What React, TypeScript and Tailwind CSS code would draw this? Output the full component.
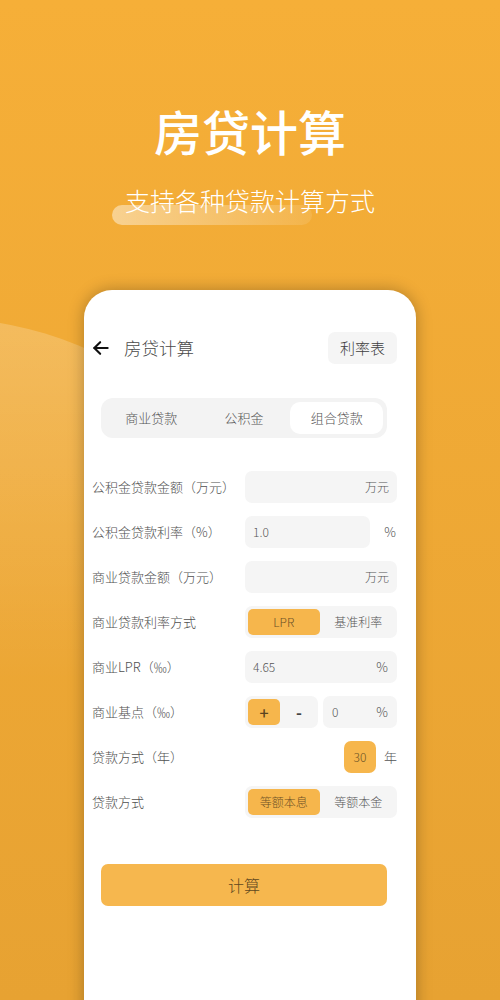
import React from "react";

function Seg({ a, b }: { a: string; b: string }) {
  return (
    <div className="grid h-[32px] w-[152px] grid-cols-2 gap-[3px] rounded-[7px] bg-[#f5f5f5] p-[3px]">
      <div className="flex items-center justify-center rounded-[5px] bg-[#f6b64c] text-[12px] text-[#6e5226]">{a}</div>
      <div className="flex items-center justify-center text-[12px] text-[#555]">{b}</div>
    </div>
  );
}

function Row({ label, children }: { label: string; children: React.ReactNode }) {
  return (
    <div className="flex h-[32px] items-center">
      <div className="w-[153px] shrink-0 text-[13px] leading-[20px] text-[#4f4f4f]">{label}</div>
      <div className="flex flex-1 items-center justify-end">{children}</div>
    </div>
  );
}

export default function App() {
  return (
    <div className="relative h-[1000px] w-[500px] overflow-hidden bg-gradient-to-b from-[#f6af38] to-[#e7a232] font-['Noto_Sans_CJK_SC',sans-serif]">
      {/* decorative circle */}
      <div className="absolute left-[-422px] top-[318px] h-[724px] w-[724px] rounded-full bg-gradient-to-b from-white/20 to-white/0 to-[50%]" />
      {/* subtitle highlight bar */}
      <div className="absolute left-[112px] top-[205px] h-[20px] w-[200px] rounded-full bg-gradient-to-r from-white/45 to-white/10" />

      <div className="relative flex flex-col items-center">
        <div className="mt-[102px] h-[56px] text-[48px] font-medium leading-[56px] text-white">房贷计算</div>
        <div className="mt-[25px] h-[34px] text-[25px] font-light leading-[34px] text-white">支持各种贷款计算方式</div>

        <div className="mt-[73px] h-[800px] w-[332px] rounded-t-[28px] bg-white pl-[8px] pr-[19px] pt-[42px] font-light shadow-[0_0_16px_rgba(0,0,0,0.28)]">
          {/* header */}
          <div className="flex h-[32px] items-center">
            <svg width="20" height="20" viewBox="0 0 24 24" fill="none" stroke="#111" strokeWidth="2.5" strokeLinecap="round" strokeLinejoin="round" className="ml-[-1px]">
              <path d="M20 12H4" />
              <path d="M11 5l-7 7 7 7" />
            </svg>
            <div className="ml-[13px] text-[17.5px] leading-[24px] text-[#4a4a4a]">房贷计算</div>
            <div className="ml-auto flex h-[32px] w-[69px] items-center justify-center rounded-[7px] bg-[#f5f5f5] text-[15px] text-[#3f3f3f]">利率表</div>
          </div>

          {/* tabs */}
          <div className="ml-[9px] mr-[10px] mt-[34px] grid h-[40px] grid-cols-3 rounded-[12px] bg-[#f3f3f3] p-[4px]">
            <div className="flex items-center justify-center text-[13px] text-[#555]">商业贷款</div>
            <div className="flex items-center justify-center text-[13px] text-[#555]">公积金</div>
            <div className="flex items-center justify-center rounded-[10px] bg-white text-[13px] text-[#555]">组合贷款</div>
          </div>

          {/* rows */}
          <div className="mt-[33px] flex flex-col gap-[13px]">
            <Row label="公积金贷款金额（万元）">
              <div className="flex h-[32px] w-[152px] items-center justify-end rounded-[7px] bg-[#f5f5f5] pr-[8px] text-[12px] text-[#555]">万元</div>
            </Row>
            <Row label="公积金贷款利率（%）">
              <div className="flex h-[32px] w-[125px] items-center rounded-[7px] bg-[#f5f5f5] pl-[8px] text-[12px] text-[#555]">1.0</div>
              <div className="w-[27px] pr-[1px] text-right text-[13px] text-[#555]">%</div>
            </Row>
            <Row label="商业贷款金额（万元）">
              <div className="flex h-[32px] w-[152px] items-center justify-end rounded-[7px] bg-[#f5f5f5] pr-[8px] text-[12px] text-[#555]">万元</div>
            </Row>
            <Row label="商业贷款利率方式">
              <Seg a="LPR" b="基准利率" />
            </Row>
            <Row label="商业LPR（‰）">
              <div className="flex h-[32px] w-[152px] items-center justify-between rounded-[7px] bg-[#f5f5f5] pl-[8px] pr-[9px] text-[12px] text-[#555]">
                <span>4.65</span>
                <span className="text-[13px]">%</span>
              </div>
            </Row>
            <Row label="商业基点（‰）">
              <div className="grid h-[32px] w-[73px] grid-cols-2 gap-[3px] rounded-[7px] bg-[#f5f5f5] p-[3px]">
                <div className="flex items-center justify-center rounded-[5px] bg-[#f6b64c] text-[16px] font-medium text-[#5a4420]">+</div>
                <div className="flex items-center justify-center text-[16px] font-bold text-[#444]">-</div>
              </div>
              <div className="ml-[5px] flex h-[32px] w-[74px] items-center justify-between rounded-[7px] bg-[#f5f5f5] pl-[9px] pr-[9px] text-[12px] text-[#555]">
                <span>0</span>
                <span className="text-[13px]">%</span>
              </div>
            </Row>
            <Row label="贷款方式（年）">
              <div className="flex h-[32px] w-[32px] items-center justify-center rounded-[7px] bg-[#f6b64c] text-[12px] text-[#6b5226]">30</div>
              <div className="w-[21px] text-right text-[13px] text-[#555]">年</div>
            </Row>
            <Row label="贷款方式">
              <Seg a="等额本息" b="等额本金" />
            </Row>
          </div>

          {/* button */}
          <div className="ml-[9px] mr-[10px] mt-[46px] flex h-[42px] items-center justify-center rounded-[7px] bg-[#f6b74e] text-[16px] text-[#5f4820]">计算</div>
        </div>
      </div>
    </div>
  );
}
